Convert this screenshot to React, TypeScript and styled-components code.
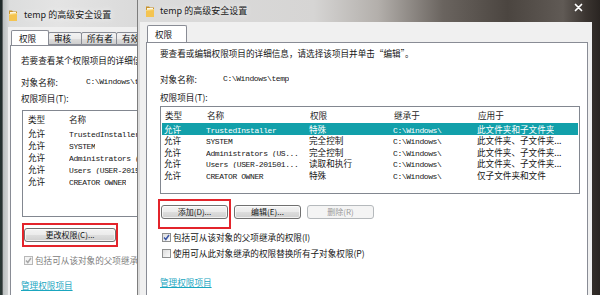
import React from "react";
import styled, { createGlobalStyle } from "styled-components";

const CJK = `"Noto Sans CJK SC", "Noto Sans", sans-serif`;
const MONO = `"Liberation Mono", "Noto Sans CJK SC", monospace`;

const GlobalStyle = createGlobalStyle`
  html, body { margin: 0; padding: 0; }
  body {
    width: 600px; height: 295px; overflow: hidden;
    background: #24302f;
    font-family: ${CJK};
  }
`;

const Desktop = styled.div`
  position: relative;
  width: 600px;
  height: 295px;
  overflow: hidden;
  background: linear-gradient(180deg, #1f2a2a, #2b3835);
  font-family: ${CJK};
  font-size: 8.6px;
  color: #111;
`;

const Win = styled.section<{ $left: number; $width: number; $front?: boolean }>`
  position: absolute;
  left: ${(p) => p.$left}px;
  top: 0;
  width: ${(p) => p.$width}px;
  height: 330px;
  display: flex;
  flex-direction: column;
  box-sizing: border-box;
  overflow: hidden;
  border-left: 1px solid ${(p) => (p.$front ? "#7d7d7d" : "#5d6262")};
  background: ${(p) =>
    p.$front
      ? "linear-gradient(90deg, #dcdcdc 0%, #d6d5d4 38%, #b3afab 52%, #6a645f 66%, #4b4540 80%, #605a55 92%, #3a3430 97%, #2a2522 100%)"
      : "linear-gradient(90deg, #b9bebe 0%, #dcdddd 5%, #e4e4e4 40%, #dadada 100%)"};
  z-index: ${(p) => (p.$front ? 2 : 1)};
`;

const TitleBar = styled.header<{ $h: number; $padL: number; $padTop?: number }>`
  height: ${(p) => p.$h}px;
  flex: none;
  display: flex;
  align-items: center;
  box-sizing: border-box;
  padding-left: ${(p) => p.$padL}px;
  padding-top: ${(p) => p.$padTop ?? 0}px;
  position: relative;
`;

const TitleText = styled.span<{ $gap: number }>`
  margin-left: ${(p) => p.$gap}px;
  font-family: ${CJK};
  font-size: 9px;
  line-height: 12px;
  color: #1a1a1a;
  white-space: nowrap;
  text-shadow: 0 0 6px rgba(255, 255, 255, 0.9);
`;

const CloseX = styled.span`
  position: absolute;
  right: 17px;
  top: 3px;
  width: 9px;
  height: 9px;
  display: flex;
`;

const Client = styled.div<{ $ml: number; $mr: number; $pl: number; $pr: number }>`
  flex: 1;
  margin-left: ${(p) => p.$ml}px;
  margin-right: ${(p) => p.$mr}px;
  padding-left: ${(p) => p.$pl}px;
  padding-right: ${(p) => p.$pr}px;
  background: #f0f0f0;
  display: flex;
  flex-direction: column;
  min-width: 0;
`;

const TabStrip = styled.div<{ $h: number }>`
  height: ${(p) => p.$h}px;
  display: flex;
  align-items: flex-end;
  flex: none;
  position: relative;
  z-index: 2;
  overflow: hidden;
`;

const Tab = styled.div<{ $w: number; $active?: boolean; $h: number; $ml?: number }>`
  box-sizing: border-box;
  width: ${(p) => p.$w}px;
  height: ${(p) => p.$h}px;
  flex: none;
  margin-left: ${(p) => p.$ml ?? 0}px;
  margin-bottom: ${(p) => (p.$active ? -1 : 0)}px;
  border: 1px solid #898c95;
  border-bottom: ${(p) => (p.$active ? "none" : "1px solid #898c95")};
  border-radius: 2px 2px 0 0;
  background: ${(p) =>
    p.$active ? "#ffffff" : "linear-gradient(180deg, #f2f2f2 0%, #ebebeb 50%, #dddddd 51%, #cfcfcf 100%)"};
  display: flex;
  align-items: center;
  padding-left: ${(p) => (p.$active ? 7 : 5)}px;
  font-size: 8.6px;
  line-height: 11px;
  color: #111;
  white-space: nowrap;
  overflow: hidden;
  & + & {
    margin-left: -1px;
  }
`;

const Panel = styled.div<{ $pl: number }>`
  flex: 1;
  background: #ffffff;
  border: 1px solid #898c95;
  border-bottom: none;
  padding-left: ${(p) => p.$pl}px;
  display: flex;
  flex-direction: column;
  align-items: flex-start;
  min-width: 0;
  overflow: hidden;
`;

const Line = styled.div<{ $mt: number; $muted?: boolean }>`
  margin-top: ${(p) => p.$mt}px;
  height: 12px;
  max-width: 100%;
  overflow: hidden;
  line-height: 12px;
  font-size: 8.6px;
  white-space: nowrap;
  display: flex;
  align-items: center;
  color: ${(p) => (p.$muted ? "#7a7a7a" : "#151515")};
`;

const Label = styled.span<{ $w: number }>`
  display: inline-block;
  width: ${(p) => p.$w}px;
  flex: none;
`;

const Mono = styled.span`
  font-family: ${MONO};
  font-size: 8px;
  letter-spacing: -0.4px;
`;

const List = styled.div<{ $w: number; $h: number; $mt: number; $ml?: number }>`
  box-sizing: border-box;
  margin-top: ${(p) => p.$mt}px;
  margin-left: ${(p) => p.$ml ?? 0}px;
  width: ${(p) => p.$w}px;
  height: ${(p) => p.$h}px;
  border: 1px solid #828790;
  background: #fff;
  flex: none;
  overflow: hidden;
`;

const HeaderRow = styled.div<{ $h: number; $pl: number }>`
  height: ${(p) => p.$h}px;
  display: flex;
  align-items: center;
  padding-left: ${(p) => p.$pl}px;
  color: #1e1e1e;
  font-size: 8.6px;
  line-height: 11px;
  white-space: nowrap;
`;

const Row = styled.div<{ $h: number; $sel?: boolean; $pl: number }>`
  height: ${(p) => p.$h}px;
  display: flex;
  align-items: center;
  margin: 0 1px 0 1px;
  padding-left: ${(p) => p.$pl}px;
  background: ${(p) => (p.$sel ? "#12a0aa" : "transparent")};
  color: ${(p) => (p.$sel ? "#ffffff" : "#151515")};
  font-size: 8.6px;
  line-height: 10px;
  white-space: nowrap;
  overflow: hidden;
`;

const Cell = styled.span<{ $w?: number }>`
  display: block;
  flex: none;
  height: 10px;
  width: ${(p) => (p.$w ? `${p.$w}px` : "auto")};
  overflow: hidden;
  white-space: nowrap;
  line-height: 10px;
`;

const ButtonRow = styled.div<{ $mt: number; $ml: number }>`
  margin-top: ${(p) => p.$mt}px;
  margin-left: ${(p) => p.$ml}px;
  display: flex;
  gap: 6px;
  flex: none;
`;

const Btn = styled.div<{ $w: number; $disabled?: boolean }>`
  position: relative;
  box-sizing: border-box;
  width: ${(p) => p.$w}px;
  height: 14px;
  border: 1px solid ${(p) => (p.$disabled ? "#b5b9bc" : "#707070")};
  border-radius: 3px;
  background: ${(p) =>
    p.$disabled
      ? "#f4f4f4"
      : "linear-gradient(180deg, #f3f3f3 0%, #ebebeb 48%, #dddddd 52%, #cfcfcf 100%)"};
  box-shadow: inset 0 0 0 1px ${(p) => (p.$disabled ? "transparent" : "rgba(255,255,255,0.7)")};
  display: flex;
  align-items: center;
  justify-content: center;
  font-size: 8px;
  line-height: 10px;
  color: ${(p) => (p.$disabled ? "#9a9a9a" : "#151515")};
  white-space: nowrap;
`;

const RedMark = styled.span<{ $t: number; $r: number; $b: number; $l: number }>`
  position: absolute;
  top: ${(p) => -p.$t}px;
  right: ${(p) => -p.$r}px;
  bottom: ${(p) => -p.$b}px;
  left: ${(p) => -p.$l}px;
  border: 2px solid #e3242b;
  pointer-events: none;
`;

const CheckRow = styled.label<{ $mt: number; $ml: number; $muted?: boolean }>`
  margin-top: ${(p) => p.$mt}px;
  margin-left: ${(p) => p.$ml}px;
  height: 12px;
  max-width: 100%;
  overflow: hidden;
  display: flex;
  align-items: center;
  gap: 2px;
  font-size: 8.6px;
  line-height: 12px;
  white-space: nowrap;
  color: ${(p) => (p.$muted ? "#808080" : "#151515")};
`;

const Box = styled.span<{ $muted?: boolean }>`
  box-sizing: border-box;
  width: 9px;
  height: 9px;
  border: 1px solid ${(p) => (p.$muted ? "#b8b8b8" : "#8e8f8f")};
  background: ${(p) => (p.$muted ? "#f4f4f4" : "linear-gradient(135deg, #dcdcdc, #fbfbfb)")};
  display: flex;
  align-items: center;
  justify-content: center;
  flex: none;
`;

const Link = styled.a<{ $mt: number }>`
  margin-top: ${(p) => p.$mt}px;
  height: 12px;
  line-height: 12px;
  font-size: 8.6px;
  color: #1aa6bf;
  text-decoration: underline;
  white-space: nowrap;
`;

const Folder = () => (
  <svg width="10" height="13" viewBox="0 0 10 13">
    <path d="M1 1.5 L4 1.5 L5 2.5 L9 2.5 L9 12 L1 12 Z" fill="#c9922a" />
    <rect x="2" y="3" width="6" height="7" fill="#fbf6e6" />
    <path d="M1 5 L9 4.2 L9 12 L1 12 Z" fill="#f4c451" />
    <path d="M1 5 L9 4.2 L9 5 L1 5.8 Z" fill="#fbe08c" />
  </svg>
);

const Check = ({ on, muted }: { on?: boolean; muted?: boolean }) => (
  <Box $muted={muted}>
    {on && (
      <svg width="7" height="7" viewBox="0 0 7 7">
        <polyline
          points="1,3.6 2.8,5.5 6,1"
          fill="none"
          stroke={muted ? "#a8a8a8" : "#3b56a5"}
          strokeWidth="1.5"
        />
      </svg>
    )}
  </Box>
);

type Entry = { who: string; perm: string; from: string; apply: string };

const entries: Entry[] = [
  { who: "TrustedInstaller", perm: "特殊", from: "C:\\Windows\\", apply: "此文件夹和子文件夹" },
  { who: "SYSTEM", perm: "完全控制", from: "C:\\Windows\\", apply: "此文件夹、子文件夹..." },
  { who: "Administrators (US...", perm: "完全控制", from: "C:\\Windows\\", apply: "此文件夹、子文件夹..." },
  { who: "Users (USER-201501...", perm: "读取和执行", from: "C:\\Windows\\", apply: "此文件夹、子文件夹..." },
  { who: "CREATOR OWNER", perm: "特殊", from: "C:\\Windows\\", apply: "仅子文件夹和文件" },
];

const backNames = [
  "TrustedInstaller",
  "SYSTEM",
  "Administrators (USER-201501...)",
  "Users (USER-201501...)",
  "CREATOR OWNER",
];

const BackWindow = () => (
  <Win $left={2} $width={136}>
    <TitleBar $h={27} $padL={5} $padTop={3}>
      <Folder />
      <TitleText $gap={6}>temp 的高级安全设置</TitleText>
    </TitleBar>
    <Client $ml={5} $mr={0} $pl={2} $pr={0}>
      <TabStrip $h={18}>
        <Tab $w={38} $h={16} $active $ml={1}>权限</Tab>
        <Tab $w={34} $h={13}>审核</Tab>
        <Tab $w={36} $h={13}>所有者</Tab>
        <Tab $w={40} $h={13}>有效权限</Tab>
      </TabStrip>
      <Panel $pl={10}>
        <Line $mt={8}>若要查看某个权限项目的详细信息，请选择该项目并单击“编辑”。</Line>
        <Line $mt={10}>
          <Label $w={65}>对象名称:</Label>
          <Mono>C:\Windows\temp</Mono>
        </Line>
        <Line $mt={4}>权限项目(T):</Line>
        <List $w={140} $h={107} $mt={6} $ml={1}>
          <HeaderRow $h={16} $pl={5}>
            <Cell $w={41}>类型</Cell>
            <Cell>名称</Cell>
          </HeaderRow>
          {backNames.map((n) => (
            <Row key={n} $h={12} $pl={4}>
              <Cell $w={41}>允许</Cell>
              <Cell>
                <Mono>{n}</Mono>
              </Cell>
            </Row>
          ))}
        </List>
        <ButtonRow $mt={11} $ml={3}>
          <Btn $w={92}>
            更改权限(C)...
            <RedMark $t={6} $r={3} $b={6} $l={3} />
          </Btn>
        </ButtonRow>
        <CheckRow $mt={12} $ml={3} $muted>
          <Check on muted />
          包括可从该对象的父项继承的权限(I)
        </CheckRow>
        <Link $mt={13}>管理权限项目</Link>
      </Panel>
    </Client>
  </Win>
);

const FrontWindow = () => (
  <Win $left={137} $width={463} $front>
    <TitleBar $h={22} $padL={7}>
      <Folder />
      <TitleText $gap={5}>temp 的高级安全设置</TitleText>
      <CloseX>
        <svg width="9" height="9" viewBox="0 0 9 9">
          <path d="M1.5 1.5 L7.5 7.5 M7.5 1.5 L1.5 7.5" stroke="#ffffff" strokeWidth="1.7" strokeLinecap="round" />
        </svg>
      </CloseX>
    </TitleBar>
    <Client $ml={2} $mr={8} $pl={6} $pr={4}>
      <TabStrip $h={20}>
        <Tab $w={40} $h={18} $active $ml={1}>权限</Tab>
      </TabStrip>
      <Panel $pl={13}>
        <Line $mt={4}>要查看或编辑权限项目的详细信息，请选择该项目并单击“编辑”。</Line>
        <Line $mt={14}>
          <Label $w={63}>对象名称:</Label>
          <Mono>C:\Windows\temp</Mono>
        </Line>
        <Line $mt={6}>权限项目(T):</Line>
        <List $w={420} $h={88} $mt={3}>
          <HeaderRow $h={16} $pl={4}>
            <Cell $w={42}>类型</Cell>
            <Cell $w={103}>名称</Cell>
            <Cell $w={84}>权限</Cell>
            <Cell $w={84}>继承于</Cell>
            <Cell>应用于</Cell>
          </HeaderRow>
          {entries.map((e, i) => (
            <Row key={e.who} $h={11.5} $sel={i === 0} $pl={2}>
              <Cell $w={42}>允许</Cell>
              <Cell $w={103}>
                <Mono>{e.who}</Mono>
              </Cell>
              <Cell $w={84}>{e.perm}</Cell>
              <Cell $w={84}>
                <Mono>{e.from}</Mono>
              </Cell>
              <Cell>{e.apply}</Cell>
            </Row>
          ))}
        </List>
        <ButtonRow $mt={11} $ml={1}>
          <Btn $w={67}>
            添加(D)...
            <RedMark $t={7} $r={4} $b={11} $l={4} />
          </Btn>
          <Btn $w={67}>编辑(E)...</Btn>
          <Btn $w={67} $disabled>删除(R)</Btn>
        </ButtonRow>
        <CheckRow $mt={12} $ml={2}>
          <Check on />
          包括可从该对象的父项继承的权限(I)
        </CheckRow>
        <CheckRow $mt={4} $ml={2}>
          <Check />
          使用可从此对象继承的权限替换所有子对象权限(P)
        </CheckRow>
        <Link $mt={17}>管理权限项目</Link>
      </Panel>
    </Client>
  </Win>
);

export default function App() {
  return (
    <>
      <GlobalStyle />
      <Desktop>
        <BackWindow />
        <FrontWindow />
      </Desktop>
    </>
  );
}
